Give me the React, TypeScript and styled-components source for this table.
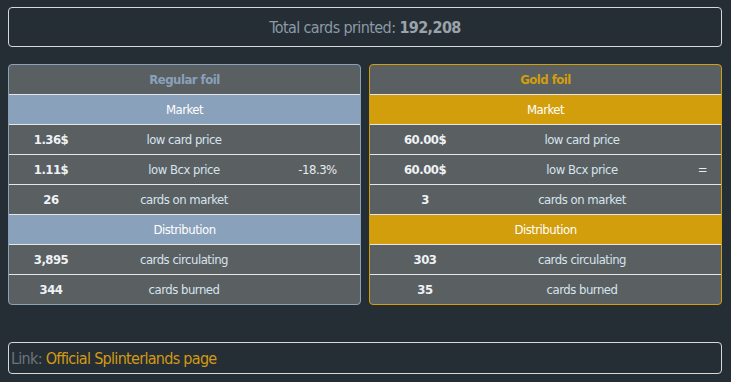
import styled, { createGlobalStyle } from 'styled-components';

const GlobalStyle = createGlobalStyle`
  body {
    margin: 0;
    background: #262e35;
    font-family: "Liberation Sans Narrow", "DejaVu Sans Condensed", "Liberation Sans", sans-serif;
    font-stretch: condensed;
  }
`;

const foils = [
  {
    name: 'Regular foil',
    accent: '#8aa1bb',
    columns: '84px 1fr 85px',
    market: [
      { value: '1.36$', label: 'low card price', extra: '' },
      { value: '1.11$', label: 'low Bcx price', extra: '-18.3%' },
      { value: '26', label: 'cards on market', extra: '' },
    ],
    distribution: [
      { value: '3,895', label: 'cards circulating', extra: '' },
      { value: '344', label: 'cards burned', extra: '' },
    ],
  },
  {
    name: 'Gold foil',
    accent: '#d29e0c',
    columns: '110px 1fr 37px',
    market: [
      { value: '60.00$', label: 'low card price', extra: '' },
      { value: '60.00$', label: 'low Bcx price', extra: '=' },
      { value: '3', label: 'cards on market', extra: '' },
    ],
    distribution: [
      { value: '303', label: 'cards circulating', extra: '' },
      { value: '35', label: 'cards burned', extra: '' },
    ],
  },
];

export default function App() {
  return (
    <Page>
      <GlobalStyle />
      <TotalBox>
        <TotalLabel>Total cards printed: </TotalLabel>
        <TotalValue>192,208</TotalValue>
      </TotalBox>
      <Cards>
        {foils.map((foil) => (
          <Card key={foil.name} $accent={foil.accent}>
            <FoilTitle $accent={foil.accent}>{foil.name}</FoilTitle>
            <Section $accent={foil.accent}>Market</Section>
            {foil.market.map((row) => (
              <Row key={row.label} $columns={foil.columns}>
                <Value>{row.value}</Value>
                <Label>{row.label}</Label>
                <Extra>{row.extra}</Extra>
              </Row>
            ))}
            <Section $accent={foil.accent}>Distribution</Section>
            {foil.distribution.map((row) => (
              <Row key={row.label} $columns={foil.columns}>
                <Value>{row.value}</Value>
                <Label>{row.label}</Label>
                <Extra>{row.extra}</Extra>
              </Row>
            ))}
          </Card>
        ))}
      </Cards>
      <LinkBox>
        <LinkLabel>Link: </LinkLabel>
        <LinkText href="#">Official Splinterlands page</LinkText>
      </LinkBox>
    </Page>
  );
}

const Page = styled.div`
  padding: 7px 9px 8px 8px;
  display: flex;
  flex-flow: column;
`;

const TotalBox = styled.div`
  height: 40px;
  box-sizing: border-box;
  border: 1px solid #d6d9dc;
  border-radius: 4px;
  display: flex;
  justify-content: center;
  align-items: center;
  font-size: 16px;
  letter-spacing: -0.6px;
  white-space: pre;
`;

const TotalLabel = styled.span`
  color: #8b9aa6;
`;

const TotalValue = styled.span`
  color: #9aa3aa;
  font-weight: bold;
`;

const Cards = styled.div`
  display: grid;
  grid-template-columns: 1fr 1fr;
  gap: 8px;
  margin-top: 17px;
`;

const Card = styled.div`
  border: 1px solid ${(props) => props.$accent};
  border-radius: 4px;
  overflow: hidden;
  background: #5a5f62;
  display: flex;
  flex-flow: column;
  font-size: 13px;
  letter-spacing: -0.5px;
`;

const FoilTitle = styled.div`
  height: 29px;
  display: flex;
  justify-content: center;
  align-items: center;
  color: ${(props) => props.$accent};
  font-weight: bold;
`;

const Section = styled.div`
  height: 29px;
  border-top: 1px solid #e4e6e8;
  background: ${(props) => props.$accent};
  display: flex;
  justify-content: center;
  align-items: center;
  color: #ffffff;
`;

const Row = styled.div`
  height: 29px;
  border-top: 1px solid #e4e6e8;
  display: grid;
  grid-template-columns: ${(props) => props.$columns};
  align-items: center;
  text-align: center;
`;

const Value = styled.div`
  color: #eef2f5;
  font-weight: bold;
`;

const Label = styled.div`
  color: #d6e4ee;
`;

const Extra = styled.div`
  color: #e6ecf0;
`;

const LinkBox = styled.div`
  margin-top: 37px;
  height: 32px;
  box-sizing: border-box;
  border: 1px solid #d6d9dc;
  border-radius: 4px;
  display: flex;
  align-items: center;
  padding-left: 2px;
  font-size: 16px;
  letter-spacing: -0.7px;
  white-space: pre;
`;

const LinkLabel = styled.span`
  color: #6c757d;
`;

const LinkText = styled.a`
  color: #d39a12;
  text-decoration: none;
`;
